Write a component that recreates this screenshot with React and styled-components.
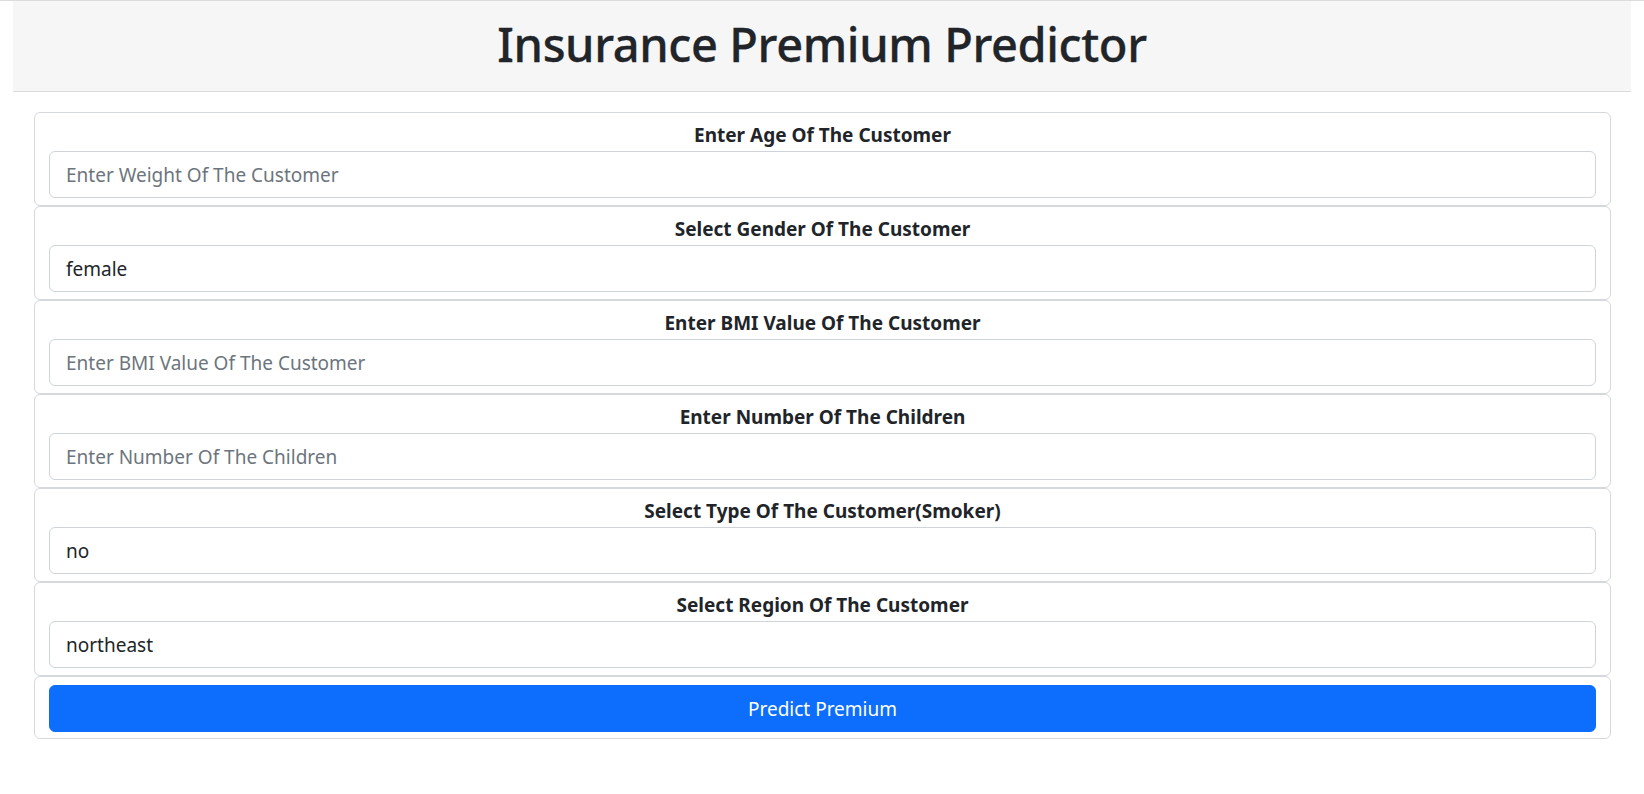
import React from 'react';
import styled, { createGlobalStyle } from 'styled-components';

const GlobalStyle = createGlobalStyle`
  html, body {
    margin: 0;
    padding: 0;
    background: #ffffff;
  }
  body {
    border-top: 1px solid #dcdcdc;
    font-family: "Noto Sans", "Open Sans", Arial, sans-serif;
    color: #212529;
  }
  * {
    box-sizing: border-box;
  }
`;

const fields = [
  { label: 'Enter Age Of The Customer', placeholder: 'Enter Weight Of The Customer' },
  { label: 'Select Gender Of The Customer', options: ['female', 'male'] },
  { label: 'Enter BMI Value Of The Customer', placeholder: 'Enter BMI Value Of The Customer' },
  { label: 'Enter Number Of The Children', placeholder: 'Enter Number Of The Children' },
  { label: 'Select Type Of The Customer(Smoker)', options: ['no', 'yes'] },
  { label: 'Select Region Of The Customer', options: ['northeast', 'northwest', 'southeast', 'southwest'] }
];

class App extends React.Component {
  render() {
    return (
      <React.Fragment>
        <GlobalStyle />
        <StyledHeader>
          <StyledTitle>Insurance Premium Predictor</StyledTitle>
        </StyledHeader>
        <StyledForm onSubmit={e => e.preventDefault()}>
          {fields.map(field => (
            <StyledCard key={field.label}>
              <StyledLabel>{field.label}</StyledLabel>
              {field.options ? (
                <StyledSelect defaultValue={field.options[0]}>
                  {field.options.map(opt => (
                    <option key={opt} value={opt}>
                      {opt}
                    </option>
                  ))}
                </StyledSelect>
              ) : (
                <StyledInput type="text" placeholder={field.placeholder} />
              )}
            </StyledCard>
          ))}
          <StyledCard isAction>
            <StyledButton type="submit">Predict Premium</StyledButton>
          </StyledCard>
        </StyledForm>
      </React.Fragment>
    );
  }
}

const StyledHeader = styled.header`
  margin: 0 13px;
  height: 91px;
  padding-bottom: 3px;
  display: flex;
  align-items: center;
  justify-content: center;
  background-color: #f6f6f6;
  border-bottom: 1px solid #dcdcdc;
`;

const StyledTitle = styled.h1`
  margin: 0;
  font-size: 47px;
  font-weight: 500;
  line-height: 1.2;
  letter-spacing: -0.4px;
  color: #212529;
  -webkit-text-stroke: 0.3px #212529;
`;

const StyledForm = styled.form`
  display: flex;
  flex-direction: column;
  margin: 20px 33px 0 34px;
`;

const StyledCard = styled.div`
  display: flex;
  flex-direction: column;
  border: 1px solid #d5d8dc;
  border-radius: 6px;
  background-color: #ffffff;
  padding: ${props => (props.isAction ? '8px 14px 6px' : '9px 14px 7px')};
`;

const StyledLabel = styled.label`
  display: block;
  text-align: center;
  font-size: 19px;
  font-weight: 700;
  line-height: 27px;
  margin-bottom: 2px;
`;

const controlStyles = `
  display: block;
  width: 100%;
  height: 47px;
  padding: 0 16px;
  font-family: "Noto Sans", "Open Sans", Arial, sans-serif;
  font-size: 19px;
  color: #212529;
  background-color: #ffffff;
  border: 1px solid #ced4da;
  border-radius: 6px;
  outline: none;
`;

const StyledInput = styled.input`
  ${controlStyles}

  &::placeholder {
    color: #6c757d;
  }
`;

const StyledSelect = styled.select`
  ${controlStyles}
  appearance: none;
  -webkit-appearance: none;
`;

const StyledButton = styled.button`
  display: block;
  width: 100%;
  height: 47px;
  font-family: "Noto Sans", "Open Sans", Arial, sans-serif;
  font-size: 19px;
  color: #ffffff;
  background-color: #0d6efd;
  border: 1px solid #0d6efd;
  border-radius: 6px;
  cursor: pointer;
`;

export default App;
